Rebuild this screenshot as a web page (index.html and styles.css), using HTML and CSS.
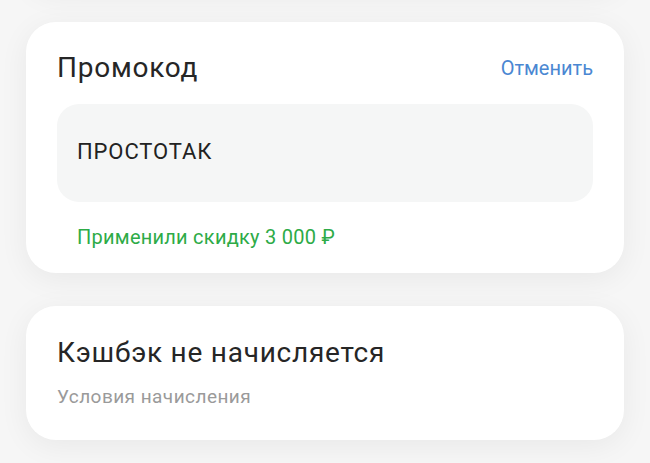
FILE: index.html
```html
<!DOCTYPE html>
<html lang="ru">
<head>
  <meta charset="UTF-8" />
  <meta name="viewport" content="width=device-width, initial-scale=1.0" />
  <title>Промокод</title>
  <link rel="stylesheet" href="styles.css">
</head>
<body>
  <div class="lista">
    <!-- карточка выше, видна только тень -->
    <div class="card card-prev"></div>

    <!-- Промокод -->
    <div class="card promo">
      <div class="promo-head">
        <span class="card-title">Промокод</span>
        <a class="link" href="#">Отменить</a>
      </div>
      <div class="promo-input">ПРОСТОТАК</div>
      <div class="promo-ok">Применили скидку 3 000 ₽</div>
    </div>

    <!-- Кэшбэк -->
    <div class="card cashback">
      <div class="card-title">Кэшбэк не начисляется</div>
      <div class="sub">Условия начисления</div>
    </div>
  </div>
</body>
</html>
```

FILE: styles.css
```css
body {
  font-family: Roboto, 'Liberation Sans', sans-serif;
  margin: 0;
  padding: 0;
  background: #f6f6f6;
  color: #222;
  height: 463px;
  overflow: hidden;
}

.lista {
  display: flex;
  flex-direction: column;
  gap: 33px;
  padding: 0 26px;
}

.card {
  background: #fff;
  border-radius: 30px;
  box-shadow: 0 6px 30px rgba(0, 0, 0, 0.06);
}

.card-prev {
  height: 60px;
  margin-top: -71px;
}

.card-title {
  font-size: 28px;
  line-height: 34px;
  font-weight: 400;
  letter-spacing: 0.75px;
  color: #262626;
}

.promo {
  padding: 29px 31px 24px;
}

.promo-head {
  display: flex;
  justify-content: space-between;
  align-items: center;
}

.link {
  font-size: 20px;
  color: #4a87d2;
  text-decoration: none;
}

.promo-input {
  margin-top: 19px;
  height: 98px;
  box-sizing: border-box;
  padding: 0 20px 4px;
  display: flex;
  align-items: center;
  background: #f5f6f6;
  border-radius: 22px;
  font-size: 22px;
  letter-spacing: 0.9px;
  color: #222;
}

.promo-ok {
  margin-top: 23px;
  padding-left: 20px;
  font-size: 20px;
  line-height: 24px;
  letter-spacing: 0.25px;
  color: #2dab47;
}

.cashback {
  padding: 30px 31px 31px;
}

.sub {
  margin-top: 15px;
  font-size: 19px;
  line-height: 24px;
  letter-spacing: 0.45px;
  color: #9a9a9a;
}
```
